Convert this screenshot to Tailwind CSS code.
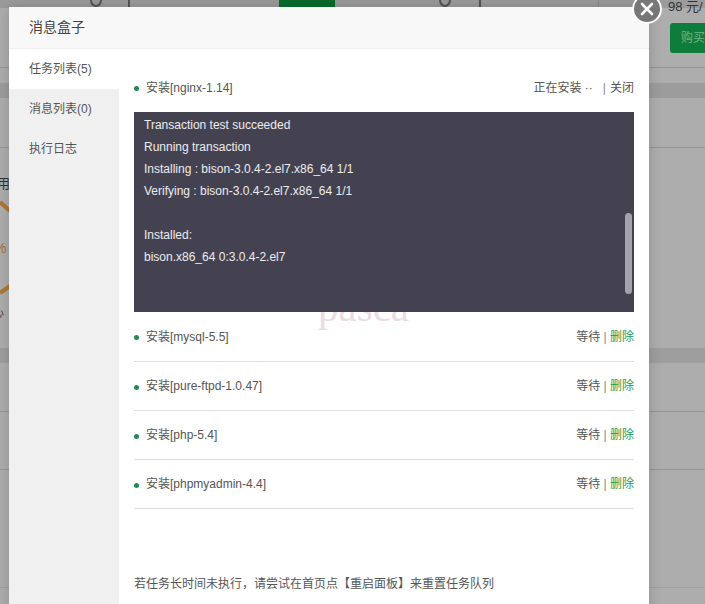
<!DOCTYPE html>
<html lang="en">
<head>
  <meta charset="UTF-8" />
  <title>消息盒子</title>
  <script src="https://cdn.jsdelivr.net/npm/@tailwindcss/browser@4"></script>
</head>
<body class="relative w-[705px] h-[604px] overflow-hidden bg-[#adadad] font-['Liberation_Sans','Noto_Sans_CJK_SC',sans-serif] text-[12px] text-[#555]">
  <!-- page behind the overlay -->
  <div class="absolute inset-0">
    <div class="absolute left-0 top-0 w-full h-[8px] bg-[#9b9b9b]"></div>
    <div class="absolute left-[279px] top-0 w-[56px] h-[7px] bg-[#0a6b2c]"></div>
    <div class="absolute left-[598px] top-0 w-[1px] h-[8px] bg-[#8a8a8a]"></div>
    <div class="absolute left-0 top-[67px] w-full h-[1px] bg-[#969696]"></div>
    <div class="absolute left-0 top-[83px] w-full h-[15px] bg-[#9c9c9c]"></div>
    <div class="absolute left-0 top-[147px] w-full h-[1px] bg-[#969696]"></div>
    <div class="absolute left-0 top-[348px] w-full h-[15px] bg-[#9e9e9e]"></div>
    <div class="absolute left-0 top-[411px] w-full h-[1px] bg-[#969696]"></div>
    <div class="absolute left-0 top-[469px] w-full h-[1px] bg-[#969696]"></div>
    <div class="absolute left-0 top-[587px] w-full h-[1px] bg-[#a0a0a0]"></div>
    <div class="absolute left-[670px] top-[23px] w-[40px] h-[30px] rounded-[3px] bg-[#0e7c3a] text-[#6fb588] text-[12px] leading-[30px] pl-[11px]">购买</div>
    <div class="absolute left-[668px] top-[-3px] text-[13px] text-[#333] whitespace-nowrap">98 元/</div>
    <div class="absolute left-[-3px] top-[174px] text-[13px] text-[#333]">用</div>
    <div class="absolute left-[-6px] top-[238px] text-[14px] text-[#a8713c]">%</div>
    <div class="absolute left-[-8px] top-[304px] text-[12px] text-[#444]">心</div>
    <svg class="absolute left-0 top-[195px]" width="10" height="110" fill="none" stroke="#b07830" stroke-width="4"><path d="M0 7 10 16M0 98 10 91"/></svg>
    <svg class="absolute left-0 top-0" width="600" height="8" fill="none" stroke="#555" stroke-width="2"><path d="M91 0a5 6 0 0 0 10 0M129 0V7M440 0a5 6 0 0 0 10 0M480 0V7"/></svg>
  </div>

  <!-- message box -->
  <div class="absolute left-[9px] top-[7px] w-[640px] h-[620px] flex flex-col bg-white shadow-[0_0_12px_rgba(0,0,0,0.18)]">
    <div class="h-[42px] shrink-0 flex items-center pl-[20px] bg-[#f8f8f8] border-b border-[#eee] text-[14px] text-[#444]">消息盒子</div>
    <div class="flex flex-1">
      <div class="w-[110px] shrink-0 bg-[#f0f0f0] flex flex-col">
        <div class="h-[40px] flex items-center pl-[20px] bg-white">任务列表(5)</div>
        <div class="h-[40px] flex items-center pl-[20px]">消息列表(0)</div>
        <div class="h-[40px] flex items-center pl-[20px]">执行日志</div>
      </div>
      <div class="relative flex-1 pl-[15px] pr-[15px] pt-[15px]">
        <div class="absolute left-[199px] top-[238px] font-['Liberation_Serif',serif] text-[41px] leading-[40px] text-[#ecdce1]">pasca</div>
        <div class="relative h-[48px] flex items-center justify-between pb-[1px]">
          <div class="flex items-center"><span class="w-[5px] h-[5px] mt-[2px] rounded-full bg-[#1f8a55] mr-[7px]"></span>安装[nginx-1.14]</div>
          <div class="flex items-center"><span class="ml-[1px]">正在安装 ··</span><span class="ml-[10px] mr-[4px] text-[#888]">|</span>关闭</div>
        </div>
        <div class="relative h-[200px] bg-[#444251] text-white/90 pl-[10px] pt-[2px] leading-[22px]">
          <div>Transaction test succeeded</div>
          <div>Running transaction</div>
          <div>Installing : bison-3.0.4-2.el7.x86_64 1/1</div>
          <div>Verifying : bison-3.0.4-2.el7.x86_64 1/1</div>
          <div class="h-[22px]"></div>
          <div>Installed:</div>
          <div>bison.x86_64 0:3.0.4-2.el7</div>
          <div class="absolute right-[2px] top-[101px] w-[7px] h-[81px] rounded-full bg-[#a3a2ac]"></div>
        </div>
        <div class="relative h-[50px] flex items-center justify-between border-b border-[#ddd]">
          <div class="flex items-center"><span class="w-[5px] h-[5px] mt-[2px] rounded-full bg-[#1f8a55] mr-[7px]"></span>安装[mysql-5.5]</div>
          <div>等待 <span class="text-[#888]">|</span> <span class="text-[#2a9a4a]">删除</span></div>
        </div>
        <div class="h-[49px] flex items-center justify-between border-b border-[#ddd]">
          <div class="flex items-center"><span class="w-[5px] h-[5px] mt-[2px] rounded-full bg-[#1f8a55] mr-[7px]"></span>安装[pure-ftpd-1.0.47]</div>
          <div>等待 <span class="text-[#888]">|</span> <span class="text-[#2a9a4a]">删除</span></div>
        </div>
        <div class="h-[49px] flex items-center justify-between border-b border-[#ddd]">
          <div class="flex items-center"><span class="w-[5px] h-[5px] mt-[2px] rounded-full bg-[#1f8a55] mr-[7px]"></span>安装[php-5.4]</div>
          <div>等待 <span class="text-[#888]">|</span> <span class="text-[#2a9a4a]">删除</span></div>
        </div>
        <div class="h-[49px] flex items-center justify-between border-b border-[#ddd]">
          <div class="flex items-center"><span class="w-[5px] h-[5px] mt-[2px] rounded-full bg-[#1f8a55] mr-[7px]"></span>安装[phpmyadmin-4.4]</div>
          <div>等待 <span class="text-[#888]">|</span> <span class="text-[#2a9a4a]">删除</span></div>
        </div>
        <div class="mt-[66px]">若任务长时间未执行，请尝试在首页点【重启面板】来重置任务队列</div>
      </div>
    </div>
  </div>

  <!-- close button -->
  <div class="absolute left-[632px] top-[-6px] w-[30px] h-[30px] rounded-full bg-[#777] border-[2px] border-white flex items-center justify-center">
    <svg width="14" height="14" viewBox="0 0 14 14" fill="none" stroke="#fff" stroke-width="2.6" stroke-linecap="round"><path d="M2 2 12 12M12 2 2 12"/></svg>
  </div>
</body>
</html>
